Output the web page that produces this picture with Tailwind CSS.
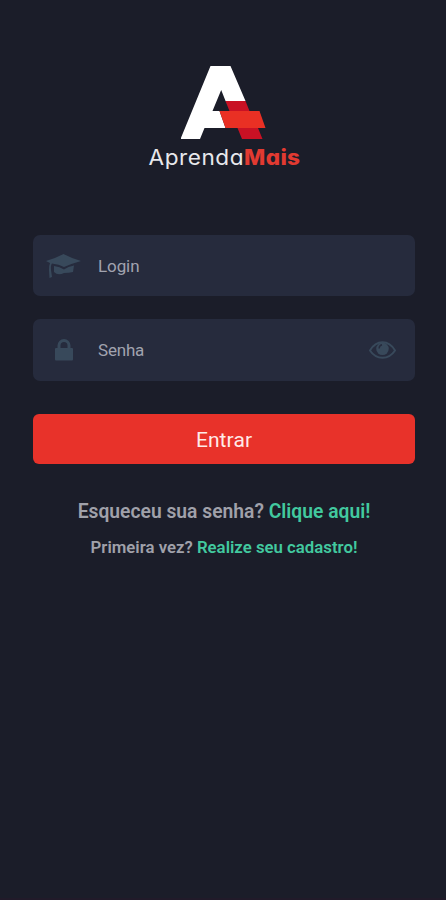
<!DOCTYPE html>
<html lang="pt-BR">
<head>
<meta charset="utf-8">
<meta name="viewport" content="width=device-width, initial-scale=1">
<title>AprendaMais</title>
<script src="https://cdn.jsdelivr.net/npm/@tailwindcss/browser@4"></script>
</head>
<body class="bg-[#1b1d29] font-[Roboto,sans-serif]">
<main class="flex h-[900px] w-[446px] flex-col items-center overflow-hidden border-b-2 border-[#211a29] pt-[65px] pr-[31px] pl-[33px]">
  <header class="flex flex-col items-center">
    <svg class="h-[76px] w-[86px]" viewBox="181.500 65 86 76" aria-hidden="true">
      <path fill="#fff" fill-rule="evenodd" d="M211 66H231L246 101H226L230 111H220L226 128H205L200.500 139H181ZM221.700 90L213 111H230Z"/>
      <path fill="#c91124" d="M226 101H246L250 111H230ZM238 128H258.500L263 139H242.500Z"/>
      <path fill="#e93024" d="M220 111H260L266 128H226Z"/>
    </svg>
    <h1 class="mt-[3px] flex h-7 w-[151px] scale-x-[1.075] justify-center whitespace-nowrap font-[Inter,sans-serif] text-[21px] leading-7 font-normal tracking-[0.5px] text-[#e8e8ec] [font-feature-settings:'cv11']">Aprenda<span class="font-extrabold tracking-[0.3px] text-[#e23a31]">Mais</span></h1>
  </header>

  <form class="mt-[63px] flex w-full flex-col">
    <label class="flex h-[61px] items-center rounded-[7px] bg-[#262b3d]">
      <svg class="ml-[13px] h-[26px] w-[35px] text-[#38495b]" viewBox="0 0 35 26" fill="currentColor" aria-hidden="true">
        <path d="M0 8Q9 5.500 17.500 1Q26 5.500 35 8Q26 10.500 18 14Q13 11 6 10.500Q4.500 12 5 17L6 24L3.500 25L3 17Q3 12 4 10Z"/>
        <path d="M8 13Q14 13.500 18 16.500Q22 13.500 28 12.500L27 19Q23 20 18 20Q12 23 8 19Z"/>
      </svg>
      <span class="mt-[2px] ml-[17px] text-[17px] tracking-[-0.1px] text-[#a1a3af]">Login</span>
    </label>
    <label class="mt-[23px] flex h-[62px] items-center rounded-[7px] bg-[#262b3d]">
      <svg class="ml-[22px] h-[23px] w-[18px] -translate-y-px text-[#38495b]" viewBox="0 0 18 23" aria-hidden="true">
        <path d="M4 11V7.500a5 5 0 0 1 10 0V11" fill="none" stroke="currentColor" stroke-width="3"/>
        <rect y="10" width="18" height="12.500" rx="1" fill="currentColor"/>
      </svg>
      <span class="mt-[2px] ml-[25px] text-[17px] tracking-[-0.2px] text-[#a1a3af]">Senha</span>
      <svg class="mr-[19px] ml-auto h-5 w-[27px] text-[#38495b]" viewBox="0 0 28 20" aria-hidden="true">
        <path d="M1 10.500Q6 2 14 2T27 10.500Q22 18 14 18T1 10.500Z" fill="none" stroke="currentColor" stroke-width="2"/>
        <circle cx="14" cy="8.800" r="6.500" fill="currentColor"/>
        <path d="M10.500 8.500Q10.500 5 13.500 4.500" fill="none" stroke="#262b3d" stroke-width="1.500"/>
      </svg>
    </label>
    <button type="button" class="mt-[33px] h-[50px] rounded-[6px] bg-[#e8322a] pt-[3px] text-[21px] tracking-[0.1px] text-[#ffeae8]">Entrar</button>
  </form>

  <p class="mt-[34px] h-7 whitespace-nowrap text-[19.3px] leading-7 font-semibold text-[#a0a1aa]">Esqueceu sua senha? <a class="text-[#42c99f]">Clique aqui!</a></p>
  <p class="mt-[9px] h-6 whitespace-nowrap text-[16.8px] leading-6 font-semibold text-[#a0a1aa]">Primeira vez? <a class="text-[#42c99f]">Realize seu cadastro!</a></p>
</main>
</body>
</html>
